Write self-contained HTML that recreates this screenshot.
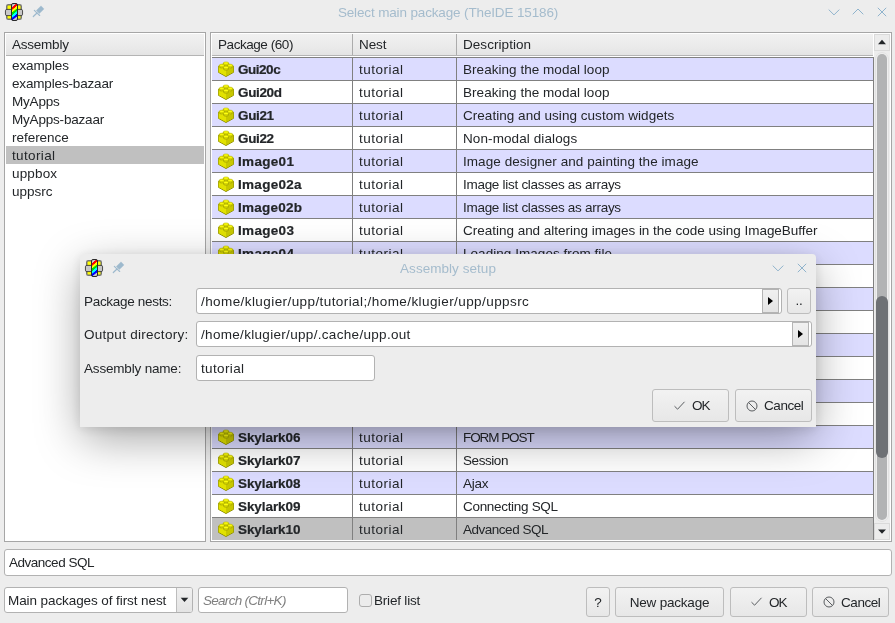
<!DOCTYPE html>
<html lang="en"><head>
<meta charset="utf-8">
<title>Select main package (TheIDE 15186)</title>
<style>
html,body{margin:0;padding:0;}
body{will-change:transform;width:895px;height:623px;overflow:hidden;background:#ededed;position:relative;
 font-family:"Liberation Sans","DejaVu Sans",sans-serif;font-size:13.5px;color:#232629;}
*{box-sizing:border-box;}
.abs{position:absolute;}
.t{position:absolute;white-space:nowrap;line-height:18px;height:18px;}
.title{color:#a5bccd;font-size:13.5px;text-align:center;}
.panel{position:absolute;border:1px solid #a6a6a6;background:#fff;}
.hdr{position:absolute;background:linear-gradient(#f1f1f1,#e9e9e9 70%,#e4e4e4);border-bottom:1px solid #b4b4b4;}
.hdr .t{line-height:21px;height:21px;top:0;}
.li{position:absolute;left:6px;width:198px;height:18px;line-height:20px;overflow:hidden;padding-left:6px;white-space:nowrap;}
.sel{background:#c0c0c0;}
.row{position:absolute;left:212px;width:661px;height:23px;border-bottom:1px solid #808080;background:#fff;}
.row.ev{background:#dcdcff;}
.row.sel{background:#c0c0c0;}
.row .c{position:absolute;top:0;height:22px;line-height:23px;white-space:nowrap;}
.row .n{left:26px;font-weight:bold;-webkit-text-stroke:0.2px #232629;}
.row .ne{left:147px;}
.row .d{left:251px;}
.row svg{position:absolute;left:6px;top:3px;}
.vline{position:absolute;width:1px;background:#808080;}
.field{position:absolute;background:#fff;border:1px solid #b2b2b2;border-radius:3px;height:26px;line-height:26px;padding-left:4px;white-space:nowrap;overflow:hidden;}
.btn{position:absolute;border:1px solid #bdbdbd;border-radius:3px;background:linear-gradient(#f2f2f2,#e7e7e7);white-space:nowrap;}
.btn .t{top:0;}
.dialog{position:absolute;left:80px;top:254px;width:736px;height:173px;background:#ededed;border-radius:4px 4px 0 0;
 box-shadow:0 13px 46px -2px rgba(0,0,0,0.37),0 2px 12px rgba(0,0,0,0.10);}
</style>
</head>
<body>

<!-- main window title bar -->
<svg class="abs" style="left:4px;top:2px" width="20" height="20" viewBox="0 0 20 20">
 <use href="#ideicon"></use>
</svg>
<svg width="0" height="0" style="position:absolute">
 <defs>
  <linearGradient id="rb" gradientUnits="userSpaceOnUse" x1="0" y1="0" x2="15.34" y2="18.46"><stop offset="0" stop-color="#c8c8c8"></stop><stop offset="0.3684" stop-color="#c8c8c8"></stop><stop offset="0.3904" stop-color="#ff0000"></stop><stop offset="0.4554" stop-color="#ff0000"></stop><stop offset="0.4754" stop-color="#ffff00"></stop><stop offset="0.5404" stop-color="#ffff00"></stop><stop offset="0.5604" stop-color="#00e000"></stop><stop offset="0.6254" stop-color="#00e000"></stop><stop offset="0.6454" stop-color="#00ffff"></stop><stop offset="0.7104" stop-color="#00ffff"></stop><stop offset="0.7304" stop-color="#0000ff"></stop><stop offset="0.7954" stop-color="#0000ff"></stop><stop offset="0.8174" stop-color="#c8c8c8"></stop><stop offset="1" stop-color="#c8c8c8"></stop></linearGradient>
  <g id="ideicon">
   <rect x="2.75" y="2.75" width="14.5" height="14.5" rx="1.6" fill="#ffff00" stroke="#767672" stroke-width="1.5"></rect>
   <rect x="1.45" y="7.4" width="17.1" height="6.2" rx="1.4" fill="#c8c8c8" stroke="#303030" stroke-width="0.85"></rect>
   <rect x="7.5" y="1.5" width="6" height="17" rx="1.5" fill="url(#rb)" stroke="#2a2a2a" stroke-width="1"></rect>
  </g>
  <g id="pin">
   <path d="M9 0.9 L11.9 3.9 L7.3 8.5 L4.4 5.5 Z" fill="#9db9cd" stroke="#9db9cd" stroke-width="0.5" stroke-linejoin="round"></path>
   <path d="M2.3 5.3 L7.7 10.5" stroke="#9db9cd" stroke-width="1.1" fill="none" stroke-linecap="round"></path>
   <path d="M5 8 L1.3 11.5" stroke="#9db9cd" stroke-width="1.2" fill="none" stroke-linecap="round"></path>
  </g>
  <g id="brick">
   <path d="M0.4 5.4 L8 1.8 L15.6 5.4 L15.6 11.3 L8 15.5 L0.4 11.3 Z" fill="#e0e000" stroke="#8c8c00" stroke-width="1" stroke-linejoin="round"></path>
   <path d="M0.7 5.6 L8 1.9 L15.3 5.6 L8 9.3 Z" fill="#f2f200"></path>
   <path d="M8 9.3 L15.3 5.7 L15.3 11.1 L8 15.1 Z" fill="#c8c800"></path>
   <path d="M0.7 5.7 L8 9.3 L8 15.1 L0.7 11.1 Z" fill="#e2e200"></path>
   <path d="M5.3 2.1 L5.3 3.7 A2.7 1.2 0 0 0 10.7 3.7 L10.7 2.1 Z" fill="#e4e400" stroke="#969600" stroke-width="0.7"></path><ellipse cx="8" cy="2.1" rx="2.7" ry="1.2" fill="#ffff10" stroke="#b4b400" stroke-width="0.5"></ellipse><path d="M1.2999999999999998 4.3 L1.2999999999999998 5.8 A2.5 1.15 0 0 0 6.3 5.8 L6.3 4.3 Z" fill="#e4e400" stroke="#969600" stroke-width="0.7"></path><ellipse cx="3.8" cy="4.3" rx="2.5" ry="1.15" fill="#ffff10" stroke="#b4b400" stroke-width="0.5"></ellipse><path d="M9.7 4.3 L9.7 5.8 A2.5 1.15 0 0 0 14.7 5.8 L14.7 4.3 Z" fill="#e4e400" stroke="#969600" stroke-width="0.7"></path><ellipse cx="12.2" cy="4.3" rx="2.5" ry="1.15" fill="#ffff10" stroke="#b4b400" stroke-width="0.5"></ellipse><path d="M5.5 6.5 L5.5 8.0 A2.5 1.15 0 0 0 10.5 8.0 L10.5 6.5 Z" fill="#e4e400" stroke="#969600" stroke-width="0.7"></path><ellipse cx="8" cy="6.5" rx="2.5" ry="1.15" fill="#ffff10" stroke="#b4b400" stroke-width="0.5"></ellipse>
  </g>
  <g id="chk"><path d="M0.5 5.2 L3.6 8.2 L10.5 0.8" fill="none" stroke="#5a5d60" stroke-width="1"></path></g>
  <g id="can"><circle cx="6" cy="6" r="5" fill="none" stroke="#5a5d60" stroke-width="1"></circle><path d="M2.5 2.5 L9.5 9.5" stroke="#5a5d60" stroke-width="1"></path></g>
 </defs>
</svg>
<svg class="abs" style="left:32px;top:5px" width="13" height="13" viewBox="0 0 13 13"><use href="#pin"></use></svg>
<div class="t title" style="left: 248px; width: 400px; top: 4px; letter-spacing: -0.144px;">Select main package (TheIDE 15186)</div>
<svg class="abs" style="left:824px;top:4px" width="68" height="18" viewBox="0 0 68 18" fill="none" stroke="#8fb3cc" stroke-width="1">
 <path d="M4.7 5.6 L10 10.9 L15.3 5.6"></path>
 <path d="M28.7 10.3 L34 5 L39.3 10.3"></path>
 <path d="M53.8 3.8 L62.2 12.2 M62.2 3.8 L53.8 12.2"></path>
</svg>

<!-- left panel -->
<div class="panel" style="left:4px;top:32px;width:202px;height:510px;"></div>
<div class="hdr" style="left:6px;top:34px;width:198px;height:22px;"><div class="t" style="left: 6px; letter-spacing: -0.229px;">Assembly</div></div>
<div class="li" style="top: 56px; letter-spacing: -0.127px;">examples</div>
<div class="li" style="top: 74px; letter-spacing: -0.164px;">examples-bazaar</div>
<div class="li" style="top: 92px; letter-spacing: -0.188px;">MyApps</div>
<div class="li" style="top: 110px; letter-spacing: -0.196px;">MyApps-bazaar</div>
<div class="li" style="top: 128px; letter-spacing: -0.033px;">reference</div>
<div class="li sel" style="top: 146px; letter-spacing: 0.369px;">tutorial</div>
<div class="li" style="top: 164px; letter-spacing: 0.164px;">uppbox</div>
<div class="li" style="top: 182px; letter-spacing: -0.005px;">uppsrc</div>

<!-- right panel -->
<div class="panel" style="left:210px;top:32px;width:682px;height:510px;"></div>
<div class="hdr" style="left:212px;top:34px;width:661px;height:22px;">
 <div class="t" style="left: 6px; letter-spacing: -0.443px;">Package (60)</div>
 <div class="t" style="left: 147px; letter-spacing: -0.094px;">Nest</div>
 <div class="t" style="left: 251px; letter-spacing: 0.053px;">Description</div>
 <div class="abs" style="left:140px;top:0px;width:1px;height:21px;background:#acacac;"></div>
 <div class="abs" style="left:244px;top:0px;width:1px;height:21px;background:#acacac;"></div>
</div>
<div class="abs" style="left:212px;top:57px;width:661px;height:1px;background:#808080;"></div>

<div id="rows">
<div class="row ev" style="top:58px;"><svg width="16" height="16"><use href="#brick"></use></svg><div class="c n" style="letter-spacing: -0.474px;">Gui20c</div><div class="c ne" style="letter-spacing: 0.482px;">tutorial</div><div class="c d" style="letter-spacing: 0.039px;">Breaking the modal loop</div></div>
<div class="row" style="top:81px;"><svg width="16" height="16"><use href="#brick"></use></svg><div class="c n" style="letter-spacing: -0.352px;">Gui20d</div><div class="c ne" style="letter-spacing: 0.482px;">tutorial</div><div class="c d" style="letter-spacing: 0.039px;">Breaking the modal loop</div></div>
<div class="row ev" style="top:104px;"><svg width="16" height="16"><use href="#brick"></use></svg><div class="c n" style="letter-spacing: -0.372px;">Gui21</div><div class="c ne" style="letter-spacing: 0.482px;">tutorial</div><div class="c d" style="letter-spacing: 0.037px;">Creating and using custom widgets</div></div>
<div class="row" style="top:127px;"><svg width="16" height="16"><use href="#brick"></use></svg><div class="c n" style="letter-spacing: -0.372px;">Gui22</div><div class="c ne" style="letter-spacing: 0.482px;">tutorial</div><div class="c d" style="letter-spacing: 0.098px;">Non-modal dialogs</div></div>
<div class="row ev" style="top:150px;"><svg width="16" height="16"><use href="#brick"></use></svg><div class="c n" style="letter-spacing: 0.321px;">Image01</div><div class="c ne" style="letter-spacing: 0.482px;">tutorial</div><div class="c d" style="letter-spacing: 0.059px;">Image designer and painting the image</div></div>
<div class="row" style="top:173px;"><svg width="16" height="16"><use href="#brick"></use></svg><div class="c n" style="letter-spacing: 0.29px;">Image02a</div><div class="c ne" style="letter-spacing: 0.482px;">tutorial</div><div class="c d" style="letter-spacing: -0.285px;">Image list classes as arrays</div></div>
<div class="row ev" style="top:196px;"><svg width="16" height="16"><use href="#brick"></use></svg><div class="c n" style="letter-spacing: 0.251px;">Image02b</div><div class="c ne" style="letter-spacing: 0.482px;">tutorial</div><div class="c d" style="letter-spacing: -0.285px;">Image list classes as arrays</div></div>
<div class="row" style="top:219px;"><svg width="16" height="16"><use href="#brick"></use></svg><div class="c n" style="letter-spacing: 0.321px;">Image03</div><div class="c ne" style="letter-spacing: 0.482px;">tutorial</div><div class="c d" style="letter-spacing: -0.016px;">Creating and altering images in the code using ImageBuffer</div></div>
<div class="row ev" style="top:242px;"><svg width="16" height="16"><use href="#brick"></use></svg><div class="c n" style="letter-spacing: 0.321px;">Image04</div><div class="c ne" style="letter-spacing: 0.482px;">tutorial</div><div class="c d" style="letter-spacing: 0.048px;">Loading Images from file</div></div>
<div class="row" style="top:265px;"></div>
<div class="row ev" style="top:288px;"></div>
<div class="row" style="top:311px;"></div>
<div class="row ev" style="top:334px;"></div>
<div class="row" style="top:357px;"></div>
<div class="row ev" style="top:380px;"></div>
<div class="row" style="top:403px;"></div>
<div class="row ev" style="top:426px;"><svg width="16" height="16"><use href="#brick"></use></svg><div class="c n" style="letter-spacing: -0.075px;">Skylark06</div><div class="c ne" style="letter-spacing: 0.482px;">tutorial</div><div class="c d" style="letter-spacing: -1.069px;">FORM POST</div></div>
<div class="row" style="top:449px;"><svg width="16" height="16"><use href="#brick"></use></svg><div class="c n" style="letter-spacing: -0.075px;">Skylark07</div><div class="c ne" style="letter-spacing: 0.482px;">tutorial</div><div class="c d" style="letter-spacing: -0.438px;">Session</div></div>
<div class="row ev" style="top:472px;"><svg width="16" height="16"><use href="#brick"></use></svg><div class="c n" style="letter-spacing: -0.075px;">Skylark08</div><div class="c ne" style="letter-spacing: 0.482px;">tutorial</div><div class="c d" style="letter-spacing: -0.277px;">Ajax</div></div>
<div class="row" style="top:495px;"><svg width="16" height="16"><use href="#brick"></use></svg><div class="c n" style="letter-spacing: -0.075px;">Skylark09</div><div class="c ne" style="letter-spacing: 0.482px;">tutorial</div><div class="c d" style="letter-spacing: -0.31px;">Connecting SQL</div></div>
<div class="row sel" style="top:518px;border-bottom:none;height:22px;"><svg width="16" height="16"><use href="#brick"></use></svg><div class="c n" style="letter-spacing: -0.075px;">Skylark10</div><div class="c ne" style="letter-spacing: 0.482px;">tutorial</div><div class="c d" style="letter-spacing: -0.486px;">Advanced SQL</div></div>
</div>
<div class="vline" style="left:352px;top:57px;height:483px;"></div>
<div class="vline" style="left:456px;top:57px;height:483px;"></div>
<div class="vline" style="left:873px;top:57px;height:483px;"></div>

<!-- scrollbar -->
<div class="abs" style="left:874px;top:34px;width:16px;height:506px;background:#ededed;"></div>
<div class="abs" style="left:874px;top:34px;width:16px;height:17px;background:#ececec;border:1px solid #dadada;"></div>
<svg class="abs" style="left:874px;top:34px" width="16" height="17"><path d="M4 10.2 L8 5.8 L12 10.2 Z" fill="#232629"></path></svg>
<div class="abs" style="left:874px;top:523px;width:16px;height:17px;background:#ececec;border:1px solid #dadada;"></div>
<svg class="abs" style="left:874px;top:523px" width="16" height="17"><path d="M4 6.4 L12 6.4 L8 10.8 Z" fill="#232629"></path></svg>
<div class="abs" style="left:875px;top:52px;width:14px;height:470px;border:1px solid #e2e2e2;border-radius:7px;background:#efefef;"></div>
<div class="abs" style="left:877px;top:54px;width:10px;height:466px;border-radius:5px;background:#b2b3b4;"></div>
<div class="abs" style="left:876px;top:296px;width:12px;height:162px;border-radius:6px;background:#6e7175;"></div>

<!-- bottom controls -->
<div class="field" style="left: 4px; top: 549px; width: 888px; height: 27px; line-height: 25px; letter-spacing: -0.486px;">Advanced SQL</div>
<div class="field" style="left: 4px; top: 587px; width: 189px; padding-left: 3px; letter-spacing: -0.087px;">Main packages of first nest</div>
<div class="abs" style="left:176px;top:588px;width:16px;height:24px;background:linear-gradient(#f0f0f0,#e4e4e4);border-left:1px solid #bdbdbd;border-radius:0 2px 2px 0;"></div>
<svg class="abs" style="left:177px;top:588px" width="15" height="24"><path d="M3.7 9.8 L11.3 9.8 L7.5 14 Z" fill="#232629"></path></svg>
<div class="field" style="left: 198px; top: 587px; width: 150px; color: rgb(128, 128, 128); font-style: italic; letter-spacing: -0.716px;">Search (Ctrl+K)</div>
<div class="abs" style="left:358.5px;top:593.5px;width:13px;height:13px;border:1px solid #adadad;border-radius:3px;background:#ececec;"></div>
<div class="t" style="left: 374px; top: 592px; letter-spacing: -0.194px;">Brief list</div>

<div class="btn" style="left:586px;top:587px;width:24px;height:30px;"><div class="t" style="left: 0px; width: 22px; text-align: center; line-height: 30px; letter-spacing: 0px;">?</div></div>
<div class="btn" style="left:615px;top:587px;width:109px;height:30px;"><div class="t" style="left: 0px; width: 107px; text-align: center; line-height: 30px; letter-spacing: -0.212px;">New package</div></div>
<div class="btn" style="left:730px;top:587px;width:77px;height:30px;"><svg class="abs" style="left:20px;top:9px" width="12" height="10"><use href="#chk"></use></svg><div class="t" style="left: 38px; line-height: 30px; letter-spacing: -0.898px;">OK</div></div>
<div class="btn" style="left:812px;top:587px;width:77px;height:30px;"><svg class="abs" style="left:10px;top:8px" width="12" height="12"><use href="#can"></use></svg><div class="t" style="left: 28px; line-height: 30px; letter-spacing: -0.438px;">Cancel</div></div>

<!-- dialog -->
<div class="dialog"><div class="abs" style="left:0;top:0;width:736px;height:172px;">
 <svg class="abs" style="left:4px;top:4px" width="20" height="20" viewBox="0 0 20 20"><use href="#ideicon"></use></svg>
 <svg class="abs" style="left:32px;top:7px" width="13" height="13" viewBox="0 0 13 13"><use href="#pin"></use></svg>
 <div class="t title" style="left: 168px; width: 400px; top: 6px; letter-spacing: 0.042px;">Assembly setup</div>
 <svg class="abs" style="left:688px;top:6px" width="44" height="18" viewBox="0 0 44 18" fill="none" stroke="#8fb3cc" stroke-width="1">
  <path d="M4.7 5.6 L10 10.9 L15.3 5.6"></path>
  <path d="M29.8 3.8 L38.2 12.2 M38.2 3.8 L29.8 12.2"></path>
 </svg>
 <div class="t" style="left: 4px; top: 39px; letter-spacing: -0.311px;">Package nests:</div>
 <div class="t" style="left: 4px; top: 72px; letter-spacing: 0.276px;">Output directory:</div>
 <div class="t" style="left: 4px; top: 106px; letter-spacing: -0.181px;">Assembly name:</div>
 <div class="field" style="left: 116px; top: 34px; width: 586px; letter-spacing: 0.418px;">/home/klugier/upp/tutorial;/home/klugier/upp/uppsrc</div>
 <div class="abs" style="left:682px;top:35px;width:17px;height:24px;background:linear-gradient(#f0f0f0,#e4e4e4);border:1px solid #b4b4b4;"></div>
 <svg class="abs" style="left:682px;top:35px" width="17" height="24"><path d="M6 8 L6 16 L11 12 Z" fill="#000"></path></svg>
 <div class="btn" style="left:707px;top:34px;width:24px;height:26px;"><div class="t" style="left: 0px; width: 22px; text-align: center; line-height: 24px; letter-spacing: -0.359px;">..</div></div>
 <div class="field" style="left: 116px; top: 67px; width: 616px; letter-spacing: 0.314px;">/home/klugier/upp/.cache/upp.out</div>
 <div class="abs" style="left:712px;top:68px;width:17px;height:24px;background:linear-gradient(#f0f0f0,#e4e4e4);border:1px solid #b4b4b4;"></div>
 <svg class="abs" style="left:712px;top:68px" width="17" height="24"><path d="M6 8 L6 16 L11 12 Z" fill="#000"></path></svg>
 <div class="field" style="left: 116px; top: 101px; width: 179px; letter-spacing: 0.369px;">tutorial</div>
 <div class="btn" style="left:572px;top:135px;width:77px;height:33px;"><svg class="abs" style="left:21px;top:11px" width="12" height="10"><use href="#chk"></use></svg><div class="t" style="left: 39px; line-height: 31px; letter-spacing: -0.898px;">OK</div></div>
 <div class="btn" style="left:655px;top:135px;width:77px;height:33px;"><svg class="abs" style="left:10px;top:10px" width="12" height="12"><use href="#can"></use></svg><div class="t" style="left: 28px; line-height: 31px; letter-spacing: -0.438px;">Cancel</div></div>
</div></div>



</body></html>
